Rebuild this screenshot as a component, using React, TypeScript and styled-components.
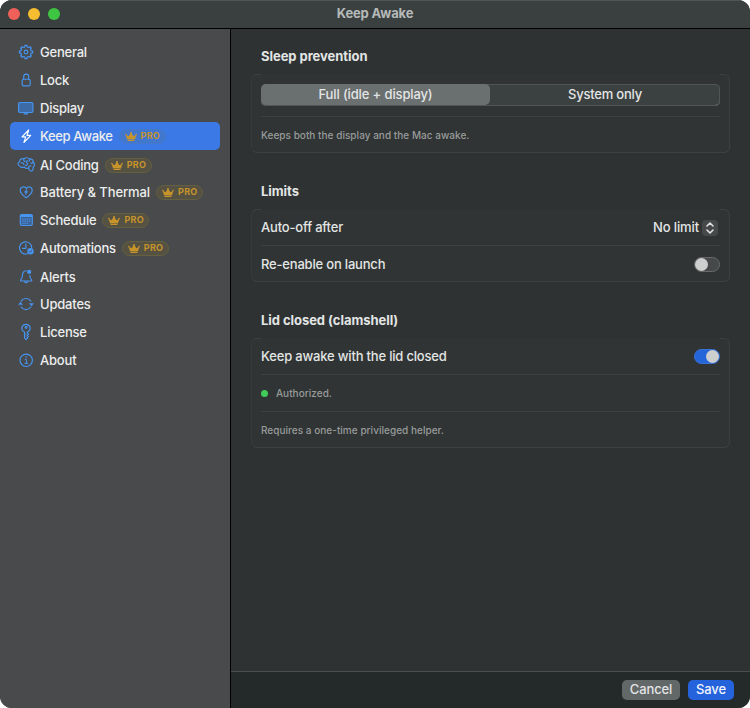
import React from 'react';
import styled, { createGlobalStyle } from 'styled-components';

const GlobalStyle = createGlobalStyle`
  * { box-sizing: border-box; }
  body { margin: 0; background: #fff; font-family: Inter, "Liberation Sans", sans-serif; font-size: 13px; color: #e3e5e5; }
`;

const Window = styled.div`
  width: 750px;
  height: 708px;
  display: flex;
  flex-direction: column;
  overflow: hidden;
  border-radius: 12px;
  background: #2e3232;
`;

const TitleBar = styled.header`
  height: 29px;
  flex: none;
  display: grid;
  grid-template-columns: 1fr auto 1fr;
  align-items: center;
  padding: 0 8px;
  background: #3a4040;
  border-bottom: 1px solid #000;
  box-shadow: inset 0 1px 0 #505656;
`;

const Lights = styled.div`
  display: flex;
  gap: 8px;
`;

const Light = styled.span<{ $color: string }>`
  width: 12px;
  height: 12px;
  border-radius: 50%;
  background: ${(p) => p.$color};
`;

const WindowTitle = styled.h1`
  margin: 0;
  padding-bottom: 2px;
  font-size: 13px;
  line-height: 16px;
  font-weight: 700;
  letter-spacing: -0.14px;
  color: #b5b9b9;
`;

const Body = styled.div`
  flex: 1;
  display: flex;
  min-height: 0;
`;

const Sidebar = styled.nav`
  width: 231px;
  flex: none;
  padding: 9px 10px;
  background: #484a4b;
  border-right: 1px solid #000;
`;

const NavItem = styled.a<{ $active?: boolean; $drop?: boolean }>`
  height: 28px;
  display: flex;
  align-items: center;
  padding: ${(p) => (p.$drop ? '2px' : '0')} 0 0 6px;
  border-radius: 5px;
  color: ${(p) => (p.$active ? '#fff' : '#4795f2')};
  background: ${(p) => (p.$active ? '#3b7ae6' : 'transparent')};
`;

const NavIcon = styled.svg`
  width: 20px;
  height: 20px;
  flex: none;
  margin-right: 4px;
  fill: none;
  stroke: currentColor;
  stroke-width: 1.15;
  stroke-linecap: round;
  stroke-linejoin: round;
  overflow: visible;
`;

const NavLabel = styled.span<{ $track: number }>`
  color: #eceded;
  font-weight: 500;
  line-height: 16px;
  white-space: nowrap;
  letter-spacing: ${(p) => p.$track}px;
`;

const ProBadge = styled.span<{ $active?: boolean }>`
  width: 47px;
  height: 15px;
  display: flex;
  align-items: center;
  margin-left: 6px;
  padding-left: 5px;
  gap: 4px;
  border-radius: 8px;
  border: 1px solid ${(p) => (p.$active ? '#4579ca' : '#65603f')};
  background: ${(p) => (p.$active ? '#4277cf' : '#555143')};
  color: #c6942b;
  font-size: 9px;
  font-weight: 700;
  line-height: 12px;
  letter-spacing: 0.3px;

  svg { width: 12px; height: 9px; flex: none; }
`;

const Main = styled.main`
  flex: 1;
  display: flex;
  flex-direction: column;
  min-width: 0;
`;

const Content = styled.div`
  flex: 1;
  padding: 19px 20px 0;
`;

const Section = styled.section<{ $gap: number }>`
  margin-bottom: ${(p) => p.$gap}px;
`;

const SectionTitle = styled.h2`
  margin: 0 10px 10px;
  font-size: 13px;
  line-height: 16px;
  font-weight: 700;
  letter-spacing: -0.05px;
`;

const Card = styled.div`
  position: relative;
  width: 479px;
  border: 1px solid #3d4141;
  border-left-color: #363b3b;
  border-radius: 6px;
  background: #303434;
  padding: 0 9px;

  &::before {
    content: '';
    position: absolute;
    top: -1px;
    left: 9px;
    right: 9px;
    height: 1px;
    background: #2f3333;
  }
`;

const Row = styled.div<{ $height: number; $shift?: number }>`
  height: ${(p) => p.$height}px;
  display: flex;
  align-items: center;
  padding-top: ${(p) => p.$shift ?? 0}px;

  & + & { border-top: 1px solid #3d4141; }
`;

const RowLabel = styled.span<{ $raise?: number }>`
  flex: 1;
  padding-bottom: ${(p) => p.$raise ?? 0}px;
  font-weight: 500;
  line-height: 16px;
  letter-spacing: -0.19px;
`;

const Note = styled.span`
  font-size: 10px;
  font-weight: 500;
  line-height: 14px;
  letter-spacing: 0.03px;
  color: #989b9b;
`;

const StatusDot = styled.span`
  width: 7px;
  height: 7px;
  margin-right: 8px;
  border-radius: 50%;
  background: #40cb5b;
`;

const Segmented = styled.div`
  flex: 1;
  height: 22px;
  margin-bottom: 1px;
  display: grid;
  grid-template-columns: 229px 1fr;
  border-radius: 5px;
  background: #3b4141;
  box-shadow: inset 0 0 0 1px #505656, inset 0 -1px 0 #727777;
`;

const Segment = styled.button<{ $on?: boolean; $track: number }>`
  border: 0;
  margin: 0 0 ${(p) => (p.$on ? 1 : 0)}px;
  padding: 0 0 ${(p) => (p.$on ? 1 : 2)}px;
  border-radius: 5px;
  font: 500 13px/16px Inter, sans-serif;
  letter-spacing: ${(p) => p.$track}px;
  color: #e3e5e5;
  background: ${(p) => (p.$on ? '#6a6f6f' : 'transparent')};
`;

const Picker = styled.div`
  display: flex;
  align-items: center;
  gap: 3px;
  margin-right: 2px;
`;

const PickerValue = styled.span`
  padding-bottom: 2px;
  font-weight: 500;
  line-height: 16px;
  letter-spacing: -0.12px;
`;

const PickerArrows = styled.svg`
  width: 16px;
  height: 16px;
  border-radius: 4px;
  background: #454949;
  fill: none;
  stroke: #e0e2e2;
  stroke-width: 1.6;
  stroke-linecap: round;
  stroke-linejoin: round;
`;

const Switch = styled.span<{ $on?: boolean }>`
  width: 26px;
  height: 15px;
  display: flex;
  align-items: center;
  justify-content: ${(p) => (p.$on ? 'flex-end' : 'flex-start')};
  border-radius: 8px;
  border: 1px solid ${(p) => (p.$on ? '#3972d4' : '#666a6a')};
  background: ${(p) => (p.$on ? '#2466da' : '#454949')};

  &::before {
    content: '';
    width: 13px;
    height: 13px;
    border-radius: 50%;
    background: #cdcfcf;
  }
`;

const Footer = styled.footer`
  height: 37px;
  flex: none;
  display: flex;
  justify-content: flex-end;
  align-items: center;
  gap: 8px;
  padding-right: 16px;
  background: #242a2a;
  border-top: 1px solid #494e4e;
`;

const Button = styled.button<{ $primary?: boolean }>`
  width: ${(p) => (p.$primary ? 46 : 58)}px;
  height: 20px;
  padding: 0 0 1px;
  border: 0;
  border-radius: 5px;
  font: 500 13px/19px Inter, sans-serif;
  letter-spacing: -0.15px;
  color: ${(p) => (p.$primary ? '#f2f5fb' : '#e3e5e5')};
  background: ${(p) => (p.$primary ? '#2563dc' : '#626767')};
`;

const Crown = () => (
  <svg viewBox="0 0 12 9" fill="currentColor">
    <circle cx="6" cy="1" r="1" />
    <circle cx=".9" cy="2.600" r=".8" />
    <circle cx="11.100" cy="2.600" r=".8" />
    <path d="M.6 2.800 3.700 4.200 5.400 1.200h1.200l1.700 3 3.100-1.400-1.400 4.400H2zM2.200 7.700h7.600l-.2.800c-.1.300-.3.500-.7.500H3.100c-.4 0-.6-.2-.7-.5z" />
  </svg>
);

const gearOutline = Array.from({ length: 8 }, (_, i) => {
  const at = (deg: number, r: number) => {
    const a = ((i * 45 + deg) * Math.PI) / 180;
    return `${(10 + r * Math.sin(a)).toFixed(2)} ${(10 - r * Math.cos(a)).toFixed(2)}`;
  };
  return `${i ? 'L' : 'M'}${at(-13, 5.200)}L${at(-9, 6.700)}L${at(9, 6.700)}L${at(13, 5.200)}`;
}).join('') + 'Z';

const icons: Record<string, React.ReactNode> = {
  general: (
    <>
      <path d={gearOutline} />
      <circle cx="10" cy="10" r="1.900" />
    </>
  ),
  lock: (
    <>
      <rect x="6.200" y="9.200" width="8" height="6.700" rx="1.200" />
      <path d="M7.700 9V6.800a2.500 2.700 0 0 1 5 0V9" />
    </>
  ),
  display: (
    <>
      <rect x="2.600" y="4.500" width="14.300" height="10" rx="1.200" fill="#3d6ba5" />
      <path d="M8 16h3.700M8.800 14.800v1.200M10.900 14.800v1.200" />
    </>
  ),
  bolt: <path d="M12.700 4 6 10.900h3.700L7.900 16.500l6.800-7.100H11z" />,
  brain: (
    <>
      <path d="M4.100 11.200C1.600 10.900 1.300 7.300 3.600 6.700 3.500 4.300 6 2.900 7.900 3.900 9.400 2.300 12 2.400 13.300 4c2.300-.5 4 1 3.900 3 1.700 1.100 1.600 3.900 0 5 .2 2.200-.8 3.900-2.200 4.200-1.500-.4-2.300-1.700-2.400-3.200-1.600.6-3.600.2-4.400-1.100-1.500.9-3.500.5-4.100-.7z" />
      <path d="M5 8c1.500-.6 2.800.3 2.900 1.500M7.900 3.900c-.5 1.300.1 2.400 1.300 2.700M11.200 5.500c-1 1-.8 2.600.5 3.100-.2 1.300-1.200 1.900-2.300 1.800M13.300 4c.5.900.3 1.800-.3 2.400M17.200 7c-.6 1.200-1.600 1.500-2.500 1M12.600 13c0-1.500 1-2.300 2.400-2.200" />
    </>
  ),
  heart: (
    <>
      <path d="M10.200 15.800C7.200 13.700 4.200 11.300 4.200 8.200c0-3.500 4.400-4.600 6-1.700 1.600-2.900 6-1.800 6 1.700 0 3.100-3 5.500-6 7.600z" />
      <path d="M10.900 6.900 8.300 10.300h1.500l-.5 2.600 2.700-3.500h-1.600z" fill="currentColor" strokeWidth=".4" />
    </>
  ),
  calendar: (
    <>
      <rect x="4.300" y="4.600" width="12" height="10.900" rx="1.500" fill="#3d6395" />
      <path d="M4.800 5.900h11" strokeWidth="2" />
      <path d="M6.600 9.100h7.500M6.600 11.200h7.500M6.600 13.300h5.300" strokeWidth="1" strokeDasharray=".7 1.500" />
    </>
  ),
  clock: (
    <>
      <path d="M11.400 15.700A6.100 6.100 0 1 1 15.700 9.500" />
      <path d="M9.900 5.900v4.400H6.500" />
      <circle cx="14.500" cy="13.300" r="3.200" fill="currentColor" stroke="none" />
      <path d="m13.100 13.400 1 1 1.800-2.200" stroke="#3d5472" strokeWidth=".9" />
    </>
  ),
  bell: (
    <>
      <path d="M10.300 3.700C7.700 3.900 6.600 5.600 6.500 8c-.1 2.800-.7 3.700-1.800 4.900-.4.600-.1 1.100.5 1.100h9.900c.6 0 .9-.5.5-1.100-1-1.100-1.700-2-1.800-4.400" />
      <path d="M8.600 14.300c.3 1.900 2.800 1.900 3.100 0" />
      <circle cx="13.200" cy="4.900" r="2.100" fill="currentColor" stroke="none" />
    </>
  ),
  updates: (
    <>
      <path d="M5.100 7.100a5.900 5.900 0 0 1 9.800 0M14.900 13a5.900 5.900 0 0 1-9.800 0" />
      <path d="M2.500 10.500 4.500 8.100l2 2.400zM13.600 9.500h4l-2 2.400z" fill="currentColor" strokeWidth=".4" />
    </>
  ),
  key: (
    <>
      <path d="M8.500 10C4.300 8.200 5.400 2.300 10 2.300s5.700 5.900 1.500 7.600v1.300l1 1-1 1.100.9 1.100-.9.900v.7L10 17.600l-1.500-1.400z" />
      <circle cx="10.100" cy="5.200" r="1" />
      <path d="M10 11v4" strokeWidth=".6" />
    </>
  ),
  info: (
    <>
      <circle cx="10.200" cy="10.300" r="6.200" />
      <path d="M9.200 9.400h1.200v3.800M8.900 13.300h3" strokeWidth="1" />
      <circle cx="10.200" cy="7.100" r=".8" fill="currentColor" stroke="none" />
    </>
  ),
};

interface Entry { icon: string; label: string; track: number; pro?: boolean; active?: boolean; drop?: boolean }

const entries: Entry[] = [
  { icon: 'general', label: 'General', track: -0.22 },
  { icon: 'lock', label: 'Lock', track: -0.25 },
  { icon: 'display', label: 'Display', track: -0.25 },
  { icon: 'bolt', label: 'Keep Awake', track: -0.38, pro: true, active: true },
  { icon: 'brain', label: 'AI Coding', track: -0.24, pro: true, drop: true },
  { icon: 'heart', label: 'Battery & Thermal', track: -0.08, pro: true },
  { icon: 'calendar', label: 'Schedule', track: -0.22, pro: true },
  { icon: 'clock', label: 'Automations', track: -0.25, pro: true },
  { icon: 'bell', label: 'Alerts', track: -0.2, drop: true },
  { icon: 'updates', label: 'Updates', track: -0.2 },
  { icon: 'key', label: 'License', track: -0.22 },
  { icon: 'info', label: 'About', track: -0.2 },
];

export default function App() {
  return (
    <Window>
      <GlobalStyle />
      <TitleBar>
        <Lights>
          <Light $color="#ee6059" />
          <Light $color="#f6bd31" />
          <Light $color="#3ec643" />
        </Lights>
        <WindowTitle>Keep Awake</WindowTitle>
      </TitleBar>
      <Body>
        <Sidebar>
          {entries.map((e) => (
            <NavItem key={e.label} $active={e.active} $drop={e.drop}>
              <NavIcon viewBox="0 0 20 20">{icons[e.icon]}</NavIcon>
              <NavLabel $track={e.track}>{e.label}</NavLabel>
              {e.pro && <ProBadge $active={e.active}><Crown />PRO</ProBadge>}
            </NavItem>
          ))}
        </Sidebar>
        <Main>
          <Content>
            <Section $gap={30}>
              <SectionTitle>Sleep prevention</SectionTitle>
              <Card>
                <Row $height={41}>
                  <Segmented>
                    <Segment $on $track={-0.13}>Full (idle + display)</Segment>
                    <Segment $track={-0.22}>System only</Segment>
                  </Segmented>
                </Row>
                <Row $height={36}><Note>Keeps both the display and the Mac awake.</Note></Row>
              </Card>
            </Section>
            <Section $gap={30}>
              <SectionTitle>Limits</SectionTitle>
              <Card>
                <Row $height={35}>
                  <RowLabel $raise={2}>Auto-off after</RowLabel>
                  <Picker>
                    <PickerValue>No limit</PickerValue>
                    <PickerArrows viewBox="0 0 16 16"><path d="m5 6 3-3 3 3M5 10l3 3 3-3" /></PickerArrows>
                  </Picker>
                </Row>
                <Row $height={36} $shift={1}>
                  <RowLabel $raise={1}>Re-enable on launch</RowLabel>
                  <Switch />
                </Row>
              </Card>
            </Section>
            <Section $gap={0}>
              <SectionTitle>Lid closed (clamshell)</SectionTitle>
              <Card>
                <Row $height={35}>
                  <RowLabel $raise={2}>Keep awake with the lid closed</RowLabel>
                  <Switch $on />
                </Row>
                <Row $height={37}><StatusDot /><Note>Authorized.</Note></Row>
                <Row $height={36}><Note>Requires a one-time privileged helper.</Note></Row>
              </Card>
            </Section>
          </Content>
          <Footer>
            <Button>Cancel</Button>
            <Button $primary>Save</Button>
          </Footer>
        </Main>
      </Body>
    </Window>
  );
}
